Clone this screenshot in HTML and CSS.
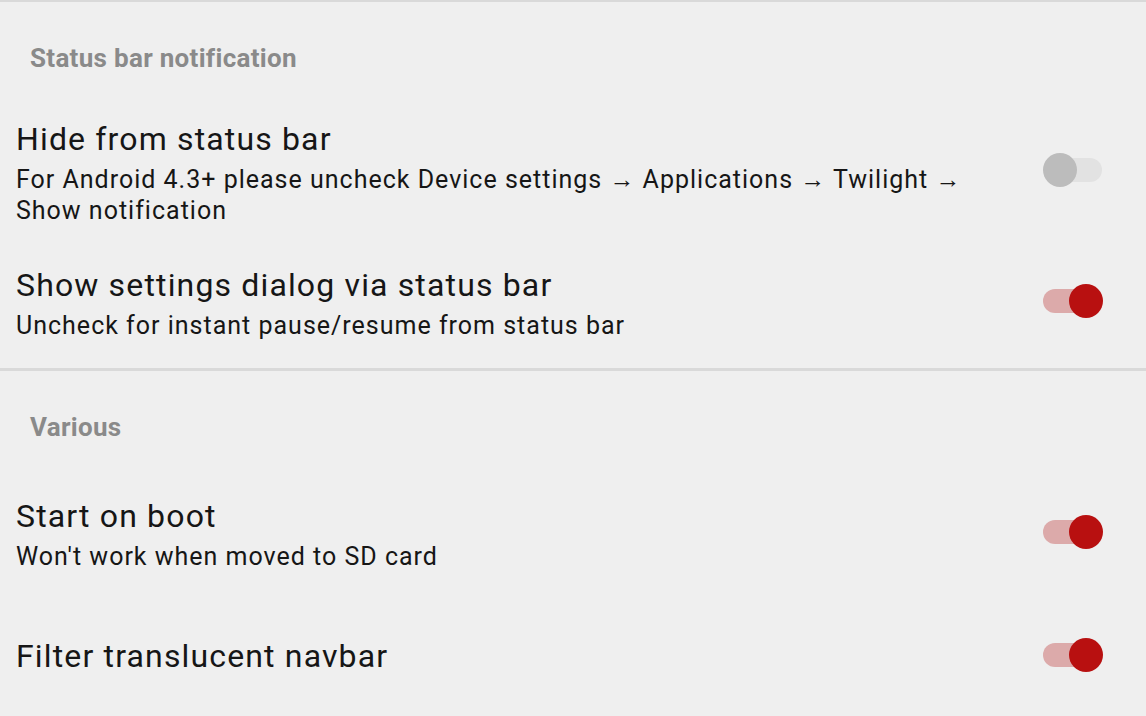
FILE: index.html
```html
<!DOCTYPE html>
<html>
<head>
<meta charset="utf-8">
<link rel="stylesheet" href="styles.css">
</head>
<body>
<div class="screen">
  <div class="divider top"></div>
  <div class="category first">Status bar notification</div>
  <div class="pref two-line">
    <div class="text">
      <div class="title">Hide from status bar</div>
      <div class="summary">For Android 4.3+ please uncheck Device settings → Applications → Twilight → Show notification</div>
    </div>
    <div class="switch off"><span class="track"></span><span class="thumb"></span></div>
  </div>
  <div class="pref">
    <div class="text">
      <div class="title">Show settings dialog via status bar</div>
      <div class="summary">Uncheck for instant pause/resume from status bar</div>
    </div>
    <div class="switch on"><span class="track"></span><span class="thumb"></span></div>
  </div>
  <div class="divider mid"></div>
  <div class="category second">Various</div>
  <div class="pref">
    <div class="text">
      <div class="title">Start on boot</div>
      <div class="summary">Won't work when moved to SD card</div>
    </div>
    <div class="switch on"><span class="track"></span><span class="thumb"></span></div>
  </div>
  <div class="pref single">
    <div class="text">
      <div class="title">Filter translucent navbar</div>
    </div>
    <div class="switch on"><span class="track"></span><span class="thumb"></span></div>
  </div>
</div>
</body>
</html>
```
FILE: styles.css
```css
html, body {
  margin: 0;
  padding: 0;
  background: #efefef;
}
body {
  font-family: Roboto, "Liberation Sans", sans-serif;
  color: #161616;
  width: 1146px;
  height: 716px;
  overflow: hidden;
}
.screen {
  display: flex;
  flex-direction: column;
}
.divider {
  height: 2px;
  background: #d9d9d9;
}
.divider.mid {
  margin-top: 7px;
  height: 3px;
}
.category {
  font-size: 26px;
  font-weight: 700;
  letter-spacing: 0.3px;
  color: #8a8a8a;
  line-height: 30px;
  padding-left: 30px;
}
.category.first {
  padding-top: 41px;
  padding-bottom: 27px;
}
.category.second {
  padding-top: 41px;
  padding-bottom: 35px;
}
.pref {
  display: flex;
  align-items: center;
  padding: 20px 43px 20px 16px;
}
.pref.single {
  padding-top: 45px;
}
.text {
  flex: 1;
  min-width: 0;
}
.two-line .text {
  max-width: 965px;
  flex: none;
  margin-right: auto;
}
.title {
  font-size: 32px;
  line-height: 38px;
  letter-spacing: 1.15px;
  margin-bottom: 6px;
}
.single .title {
  margin-bottom: 0;
}
.summary {
  font-size: 25px;
  line-height: 31px;
  letter-spacing: 1px;
}
.switch {
  position: relative;
  width: 60px;
  height: 34px;
  flex: none;
  margin-top: -6px;
}
.single .switch {
  margin-top: -2px;
}
.switch .track {
  position: absolute;
  left: 2px;
  right: 1px;
  top: 5px;
  height: 24px;
  border-radius: 12px;
}
.switch .thumb {
  position: absolute;
  top: 0;
  width: 34px;
  height: 34px;
  border-radius: 50%;
}
.switch.off .track { background: #e2e2e2; }
.switch.off .thumb { left: 0; background: #bcbcbc; }
.switch.on .track { background: #dcaaaa; left: 0; }
.switch.on .thumb { right: 0; background: #b81010; }
```
